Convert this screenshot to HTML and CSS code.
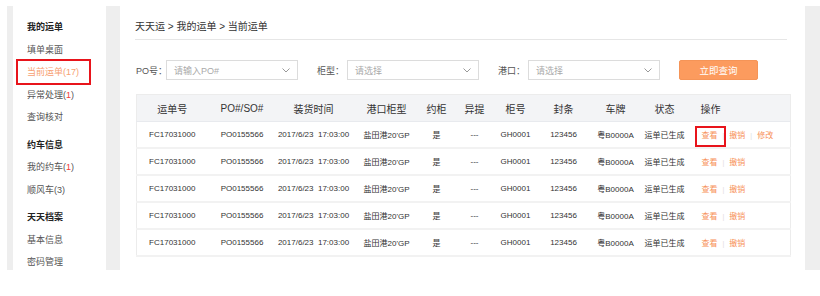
FILE: index.html
```html
<!DOCTYPE html>
<html lang="zh-CN">
<head>
    <meta charset="UTF-8">
    <title>当前运单</title>
    <link rel="stylesheet" href="styles.css">
</head>
<body>
    <div class="page">
        <div class="sidebar">
            <div class="group">
                <div class="group-title">我的运单</div>
                <a class="item" href="#">填单桌面</a>
                <a class="item active" href="#">当前运单(17)</a>
                <a class="item" href="#">异常处理(<span class="num">1</span>)</a>
                <a class="item" href="#">查询核对</a>
            </div>
            <div class="group">
                <div class="group-title">约车信息</div>
                <a class="item" href="#">我的约车(<span class="num">1</span>)</a>
                <a class="item" href="#">顺风车(3)</a>
            </div>
            <div class="group">
                <div class="group-title">天天档案</div>
                <a class="item" href="#">基本信息</a>
                <a class="item" href="#">密码管理</a>
            </div>
        </div>

        <div class="main">
            <div class="crumbs">天天运 &gt; 我的运单 &gt; 当前运单</div>

            <div class="filters">
                <div class="field">
                    <label>PO号：</label>
                    <div class="select">
                        <span class="placeholder">请输入PO#</span>
                        <svg class="arrow" width="8" height="5" viewBox="0 0 8 5"><polyline points="0.5,0.5 4,4 7.5,0.5" fill="none" stroke="#999" stroke-width="1"/></svg>
                    </div>
                </div>
                <div class="field">
                    <label>柜型：</label>
                    <div class="select">
                        <span class="placeholder">请选择</span>
                        <svg class="arrow" width="8" height="5" viewBox="0 0 8 5"><polyline points="0.5,0.5 4,4 7.5,0.5" fill="none" stroke="#999" stroke-width="1"/></svg>
                    </div>
                </div>
                <div class="field">
                    <label>港口：</label>
                    <div class="select">
                        <span class="placeholder">请选择</span>
                        <svg class="arrow" width="8" height="5" viewBox="0 0 8 5"><polyline points="0.5,0.5 4,4 7.5,0.5" fill="none" stroke="#999" stroke-width="1"/></svg>
                    </div>
                </div>
                <button class="search-btn" type="button">立即查询</button>
            </div>

            <table class="orders">
                <colgroup>
                    <col style="width:71px">
                    <col style="width:69px">
                    <col style="width:74px">
                    <col style="width:72px">
                    <col style="width:28px">
                    <col style="width:48px">
                    <col style="width:34px">
                    <col style="width:62px">
                    <col style="width:42px">
                    <col style="width:56px">
                    <col style="width:98px">
                </colgroup>
                <thead>
                    <tr>
                        <th>运单号</th>
                        <th>PO#/SO#</th>
                        <th>装货时间</th>
                        <th>港口柜型</th>
                        <th>约柜</th>
                        <th>异提</th>
                        <th>柜号</th>
                        <th>封条</th>
                        <th>车牌</th>
                        <th>状态</th>
                        <th class="ops">操作</th>
                    </tr>
                </thead>
                <tbody>
                    <tr>
                        <td>FC17031000</td>
                        <td>PO0155566</td>
                        <td>2017/6/23&nbsp;&nbsp;17:03:00</td>
                        <td>盐田港20'GP</td>
                        <td>是</td>
                        <td>---</td>
                        <td>GH0001</td>
                        <td>123456</td>
                        <td>粤B0000A</td>
                        <td>运单已生成</td>
                        <td class="ops"><a class="marked" href="#">查看</a><span class="sep">|</span><a href="#">撤销</a><span class="sep">|</span><a href="#">修改</a></td>
                    </tr>
                    <tr>
                        <td>FC17031000</td>
                        <td>PO0155566</td>
                        <td>2017/6/23&nbsp;&nbsp;17:03:00</td>
                        <td>盐田港20'GP</td>
                        <td>是</td>
                        <td>---</td>
                        <td>GH0001</td>
                        <td>123456</td>
                        <td>粤B0000A</td>
                        <td>运单已生成</td>
                        <td class="ops"><a href="#">查看</a><span class="sep">|</span><a href="#">撤销</a></td>
                    </tr>
                    <tr>
                        <td>FC17031000</td>
                        <td>PO0155566</td>
                        <td>2017/6/23&nbsp;&nbsp;17:03:00</td>
                        <td>盐田港20'GP</td>
                        <td>是</td>
                        <td>---</td>
                        <td>GH0001</td>
                        <td>123456</td>
                        <td>粤B0000A</td>
                        <td>运单已生成</td>
                        <td class="ops"><a href="#">查看</a><span class="sep">|</span><a href="#">撤销</a></td>
                    </tr>
                    <tr>
                        <td>FC17031000</td>
                        <td>PO0155566</td>
                        <td>2017/6/23&nbsp;&nbsp;17:03:00</td>
                        <td>盐田港20'GP</td>
                        <td>是</td>
                        <td>---</td>
                        <td>GH0001</td>
                        <td>123456</td>
                        <td>粤B0000A</td>
                        <td>运单已生成</td>
                        <td class="ops"><a href="#">查看</a><span class="sep">|</span><a href="#">撤销</a></td>
                    </tr>
                    <tr>
                        <td>FC17031000</td>
                        <td>PO0155566</td>
                        <td>2017/6/23&nbsp;&nbsp;17:03:00</td>
                        <td>盐田港20'GP</td>
                        <td>是</td>
                        <td>---</td>
                        <td>GH0001</td>
                        <td>123456</td>
                        <td>粤B0000A</td>
                        <td>运单已生成</td>
                        <td class="ops"><a href="#">查看</a><span class="sep">|</span><a href="#">撤销</a></td>
                    </tr>
                </tbody>
            </table>
        </div>
    </div>
</body>
</html>
```

FILE: styles.css
```css
body {
    margin: 0;
    padding: 6px 0 0 0;
    background: #fff;
    font-family: "Liberation Sans", "Noto Sans CJK SC", sans-serif;
    color: #444;
}
a {
    text-decoration: none;
}
.page {
    display: flex;
    margin-left: 7px;
    padding: 0 15px 0 6px;
    height: 264px;
    background: #eeeeee;
    gap: 14px;
}

/* sidebar */
.sidebar {
    flex: 0 0 93px;
    background: #fff;
    padding-top: 10px;
    box-sizing: border-box;
}
.group + .group {
    margin-top: 5px;
}
.group-title,
.sidebar .item {
    display: block;
    padding-left: 14px;
    line-height: 22.5px;
    font-size: 9px;
    white-space: nowrap;
}
.group-title {
    color: #222;
    font-weight: bold;
}
.sidebar .item {
    color: #555;
}
.sidebar .item .num {
    color: #f03c3c;
}
.sidebar .item.active {
    color: #f7a072;
    position: relative;
}
.sidebar .item.active::after {
    content: "";
    position: absolute;
    left: 3px;
    top: -2px;
    width: 71px;
    height: 22px;
    border: 2px solid #e8141b;
}

/* main panel */
.main {
    flex: 1;
    min-width: 0;
    background: #fff;
    padding: 0 18px 0 15px;
}
.crumbs {
    padding-top: 14px;
    padding-bottom: 5px;
    line-height: 14px;
    font-size: 10px;
    color: #333;
    border-bottom: 1px solid #e6e6e6;
}
.filters {
    display: flex;
    align-items: center;
    gap: 19px;
    margin-top: 20px;
    margin-left: 1px;
}
.field {
    display: flex;
    align-items: center;
}
.field label {
    flex: none;
    width: 30px;
    overflow: visible;
    font-size: 9px;
    color: #555;
    white-space: nowrap;
}
.select {
    flex: none;
    width: 132px;
    height: 20px;
    box-sizing: border-box;
    border: 1px solid #dcdcdc;
    display: flex;
    align-items: center;
    justify-content: space-between;
    padding: 0 7px 0 7px;
}
.placeholder {
    font-size: 9px;
    color: #aaa;
}
.arrow {
    display: block;
}
.search-btn {
    width: 79px;
    height: 20px;
    border: 1px solid #f59457;
    border-radius: 2px;
    background: #fc9b5e;
    color: #fff;
    font-family: inherit;
    font-size: 9.5px;
    padding: 0;
}

/* table */
.orders {
    margin-top: 14px;
    margin-left: 1px;
    width: 654px;
    table-layout: fixed;
    border-collapse: collapse;
    border: 1px solid #ececec;
}
.orders th {
    height: 26px;
    background: #f3f4f6;
    font-weight: normal;
    font-size: 10px;
    color: #333;
    text-align: center;
    padding: 0;
    border-bottom: 1px solid #e8eaee;
    white-space: nowrap;
}
.orders td {
    height: 25px;
    font-size: 8px;
    color: #333;
    text-align: center;
    padding: 0;
    border-bottom: 2px solid #f2f2f2;
    white-space: nowrap;
}
.orders .ops {
    text-align: left;
    padding-left: 8px;
}
.orders td.ops {
    padding-left: 9px;
}
.ops a {
    color: #f7925a;
}
.ops .sep {
    color: #ddd;
    margin: 0 5px;
    font-size: 7px;
}
.ops .marked {
    position: relative;
}
.ops .marked::after {
    content: "";
    position: absolute;
    left: -7px;
    top: -5px;
    width: 27px;
    height: 17px;
    border: 2px solid #e8141b;
}
```
